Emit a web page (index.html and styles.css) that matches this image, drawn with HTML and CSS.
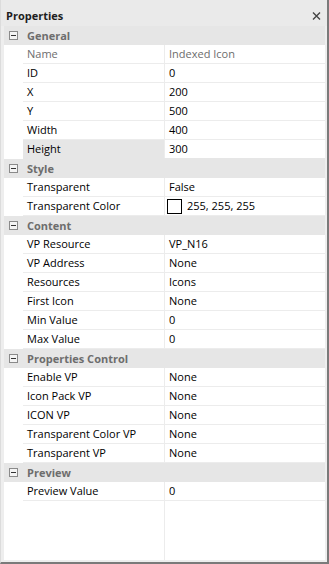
FILE: index.html
```html
<html>
    <head>
        <title>Properties</title>
        <link rel="stylesheet" href="styles.css">
    </head>
    <body>
        <div class="panel">
            <div class="header">
                <span class="title">Properties</span>
                <i class="close">
                    <svg xmlns="http://www.w3.org/2000/svg" width="9" height="8" viewBox="0 0 9 8">
                        <path d="M1 0.5L8 7.5M8 0.5L1 7.5" stroke="#444" stroke-width="1.4" fill="none"/>
                    </svg>
                </i>
            </div>
            <div class="grid">
                <div class="category"><i class="toggle"></i><span>General</span></div>
                <div class="prop readonly"><span class="name">Name</span><span class="value">Indexed Icon</span></div>
                <div class="prop"><span class="name">ID</span><span class="value">0</span></div>
                <div class="prop"><span class="name">X</span><span class="value">200</span></div>
                <div class="prop"><span class="name">Y</span><span class="value">500</span></div>
                <div class="prop"><span class="name">Width</span><span class="value">400</span></div>
                <div class="prop selected"><span class="name">Height</span><span class="value">300</span></div>

                <div class="category"><i class="toggle"></i><span>Style</span></div>
                <div class="prop"><span class="name">Transparent</span><span class="value">False</span></div>
                <div class="prop"><span class="name">Transparent Color</span><span class="value"><i class="swatch"></i>255, 255, 255</span></div>

                <div class="category"><i class="toggle"></i><span>Content</span></div>
                <div class="prop"><span class="name">VP Resource</span><span class="value">VP_N16</span></div>
                <div class="prop"><span class="name">VP Address</span><span class="value">None</span></div>
                <div class="prop"><span class="name">Resources</span><span class="value">Icons</span></div>
                <div class="prop"><span class="name">First Icon</span><span class="value">None</span></div>
                <div class="prop"><span class="name">Min Value</span><span class="value">0</span></div>
                <div class="prop"><span class="name">Max Value</span><span class="value">0</span></div>

                <div class="category"><i class="toggle"></i><span>Properties Control</span></div>
                <div class="prop"><span class="name">Enable VP</span><span class="value">None</span></div>
                <div class="prop"><span class="name">Icon Pack VP</span><span class="value">None</span></div>
                <div class="prop"><span class="name">ICON VP</span><span class="value">None</span></div>
                <div class="prop"><span class="name">Transparent Color VP</span><span class="value">None</span></div>
                <div class="prop"><span class="name">Transparent VP</span><span class="value">None</span></div>

                <div class="category"><i class="toggle"></i><span>Preview</span></div>
                <div class="prop"><span class="name">Preview Value</span><span class="value">0</span></div>

                <div class="filler"><div class="filler-name"></div><div class="filler-value"></div></div>
            </div>
        </div>
    </body>
</html>
```

FILE: styles.css
```css
* {
box-sizing: border-box;
}
body {
margin: 0;
background-color: #FFF;
}
.panel {
width: 329px;
height: 564px;
display: flex;
flex-direction: column;
background-color: #EEEEEE;
border-left: 1px solid #DCDCDC;
border-right: 2px solid #7A7A7A;
border-bottom: 2px solid #7A7A7A;
font-family: "Open Sans", sans-serif;
font-size: 11px;
color: #000;
}
.header {
height: 26px;
flex: 0 0 26px;
display: flex;
justify-content: space-between;
padding: 6px 6px 0 5px;
line-height: 19px;
background-color: #EAEAEA;
}
.title {
font-weight: bold;
color: #1E1E1E;
}
.close {
display: flex;
margin-top: 6px;
height: 8px;
}
.grid {
flex: 1;
display: flex;
flex-direction: column;
margin: 0 2px 2px 3px;
background-color: #FFF;
}
.category {
height: 19px;
flex: 0 0 19px;
display: flex;
align-items: center;
background-color: #E6E6E6;
font-weight: bold;
color: #6D6D6D;
line-height: 19px;
}
.toggle {
position: relative;
width: 9px;
height: 9px;
margin: 0 9px 0 5px;
border: 1px solid #8A8A8A;
background-color: #F4F4F4;
}
.toggle::after {
content: "";
position: absolute;
left: 1px;
top: 3px;
width: 5px;
height: 1px;
background-color: #333;
}
.prop {
height: 19px;
flex: 0 0 19px;
display: grid;
grid-template-columns: 142px 1fr;
margin-left: 19px;
line-height: 18px;
border-bottom: 1px solid #ECECEC;
}
.prop .name {
padding-left: 4px;
border-right: 1px solid #ECECEC;
white-space: nowrap;
}
.prop .value {
display: flex;
align-items: center;
padding-left: 4px;
white-space: nowrap;
}
.selected {
border-bottom-color: #E6E6E6;
}
.selected .name {
background-color: #E6E6E6;
}
.readonly .name,
.readonly .value {
color: #6D6D6D;
}
.swatch {
width: 15px;
height: 15px;
margin: 0 5px 0 -2px;
border: 1px solid #000;
background-color: #FFF;
}
.filler {
flex: 1;
display: flex;
}
.filler-name {
width: 161px;
border-right: 1px solid #ECECEC;
}
.filler-value {
flex: 1;
}
```
